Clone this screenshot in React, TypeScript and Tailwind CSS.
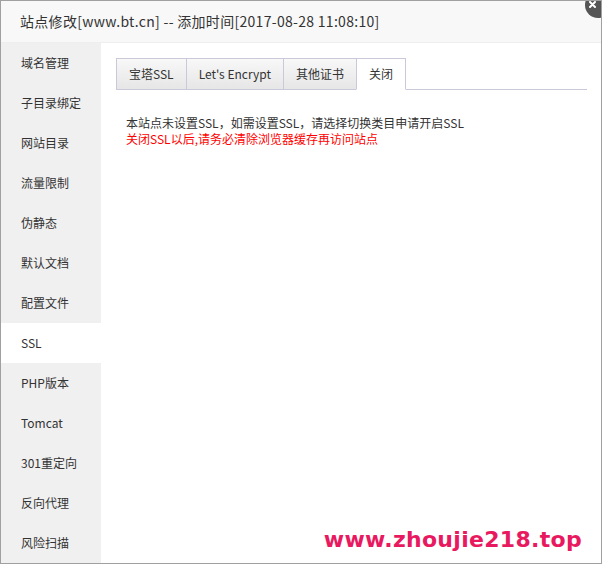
import React from "react";

const menu = [
  "域名管理",
  "子目录绑定",
  "网站目录",
  "流量限制",
  "伪静态",
  "默认文档",
  "配置文件",
  "SSL",
  "PHP版本",
  "Tomcat",
  "301重定向",
  "反向代理",
  "风险扫描",
];

const tabs = ["宝塔SSL", "Let's Encrypt", "其他证书", "关闭"];

export default function App() {
  return (
    <div
      className="relative w-[602px] h-[564px] overflow-hidden bg-white border border-[#a0a0a0] flex flex-col text-[#333]"
      style={{ fontFamily: '"Noto Sans CJK SC", "Noto Sans", sans-serif' }}
    >
      <div className="h-[42px] shrink-0 bg-[#f8f8f8] border-b border-[#eee] flex items-center pl-[19px] text-[14px] tracking-[0.3px]">
        站点修改[www.bt.cn] -- 添加时间[2017-08-28 11:08:10]
      </div>
      {/* close button, mostly outside the frame */}
      <div className="absolute right-[-10px] top-[-9px] w-[26px] h-[26px] rounded-full bg-[#555]">
        <svg width="26" height="26" viewBox="0 0 26 26" className="block">
          <path d="M5 10 L10 15 M10 10 L5 15" stroke="#fff" strokeWidth="2" strokeLinecap="round" />
        </svg>
      </div>
      <div className="flex flex-1">
        <div className="w-[100px] bg-[#f0f0f0] flex flex-col">
          {menu.map((m) => (
            <div
              key={m}
              className={`h-[40px] shrink-0 flex items-center pl-[20px] text-[12px] ${m === "SSL" ? "bg-white" : ""}`}
            >
              {m}
            </div>
          ))}
        </div>
        <div className="flex-1 pl-[15px] pr-[14px] pt-[15px]">
          <div className="flex border-b border-[#c9c9d9] h-[32px]">
            {tabs.map((t) => (
              <div
                key={t}
                className={`h-[32px] px-[12px] flex items-center text-[12px] border border-[#c9c9d9] -ml-[1px] first:ml-0 ${
                  t === "关闭" ? "bg-white border-b-white" : "bg-gradient-to-b from-[#f8f8f8] to-[#e6e6e6]"
                }`}
              >
                {t}
              </div>
            ))}
          </div>
          <div className="pl-[10px] pt-[25px] text-[12px] leading-[16px]">
            <div>本站点未设置SSL，如需设置SSL，请选择切换类目申请开启SSL</div>
            <div className="text-[#ff0000]">关闭SSL以后,请务必清除浏览器缓存再访问站点</div>
          </div>
        </div>
      </div>
      <div
        className="absolute right-[19px] bottom-[7px] text-[#e8195f] text-[22px] font-bold tracking-[0.3px]"
        style={{ fontFamily: '"DejaVu Sans", sans-serif' }}
      >
        www.zhoujie218.top
      </div>
    </div>
  );
}
